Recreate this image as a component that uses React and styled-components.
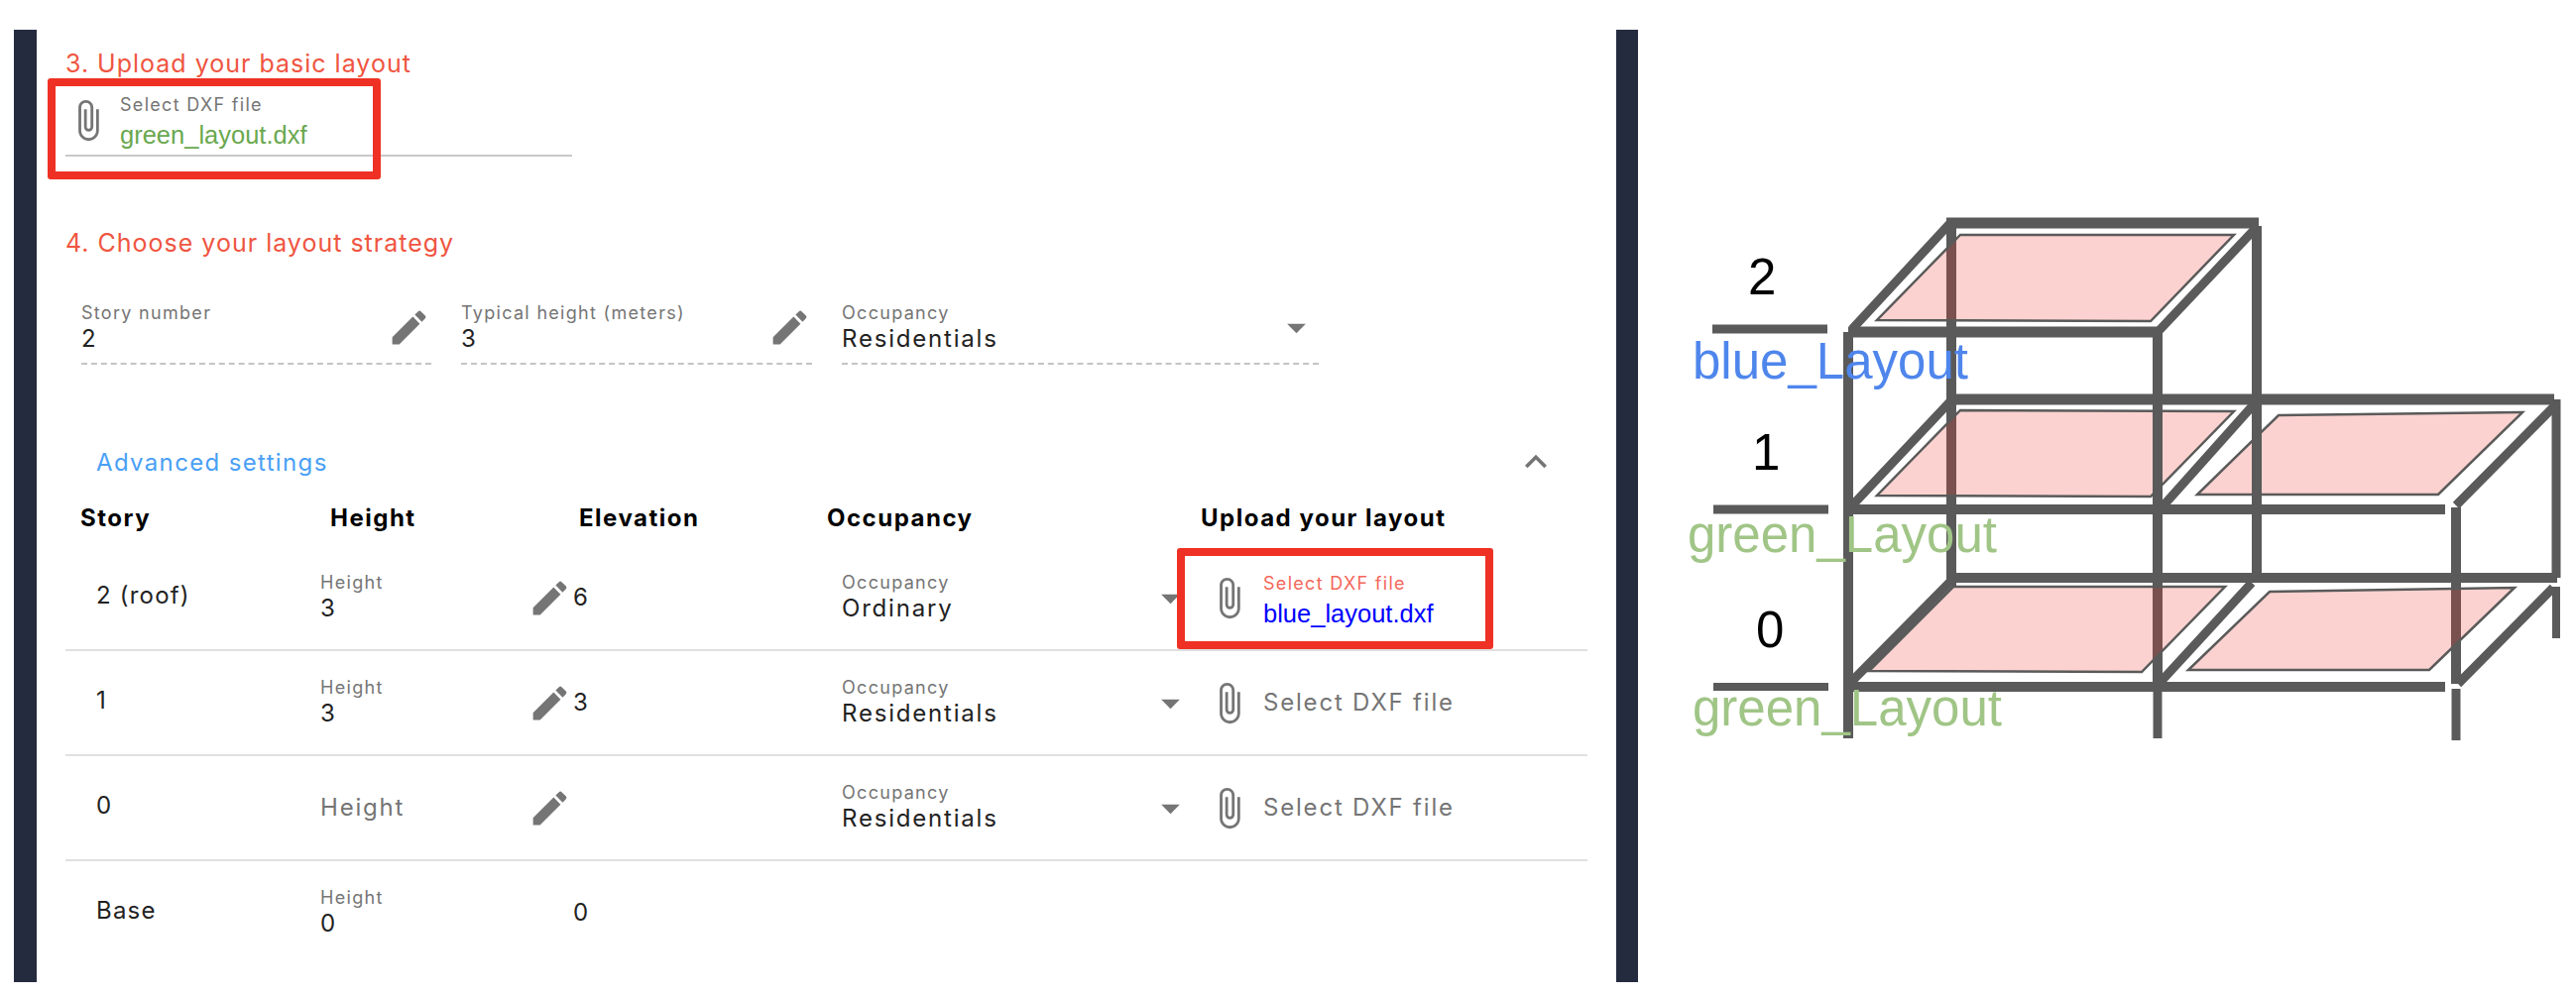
import React from "react";
import styled, { createGlobalStyle } from "styled-components";
import { MdAttachFile, MdEdit, MdArrowDropDown, MdExpandLess } from "react-icons/md";

const GlobalStyle = createGlobalStyle`
  html, body {
    margin: 0;
    background: #fff;
  }
  body {
    font-family: "Inter", "Liberation Sans", sans-serif;
  }
`;

const Page = styled.div`
  display: flex;
  width: 2598px;
  height: 1006px;
  padding: 30px 0 0 14px;
  box-sizing: border-box;
  overflow: hidden;
`;

const Panel = styled.div`
  width: 1638px;
  height: 961px;
  flex: none;
  box-sizing: border-box;
  border-left: 23px solid #252b3f;
  border-right: 22px solid #252b3f;
  padding: 21px 29px 0;
`;

const StepTitle = styled.h2`
  margin: ${(p) => p.$top || 0}px 0 0;
  font-size: 25px;
  line-height: 26px;
  font-weight: 400;
  color: #ef5541;
  letter-spacing: 1px;
`;

const UploadField = styled.div`
  position: relative;
  display: flex;
  align-items: center;
  gap: 10px;
  width: 511px;
  height: 64px;
  margin-top: 15px;
  border-bottom: 2px solid #c8c8c8;
  color: #757575;
  svg {
    flex: none;
    margin-bottom: 6px;
  }
`;

const Highlight = styled.div`
  position: absolute;
  left: ${(p) => p.$left}px;
  top: ${(p) => p.$top}px;
  width: ${(p) => p.$width}px;
  height: ${(p) => p.$height}px;
  box-sizing: border-box;
  border: 8px solid #ee3124;
  border-radius: 3px;
`;

const FileText = styled.div`
  display: flex;
  flex-direction: column;
  padding-top: ${(p) => p.$pad || 0}px;
`;

const SmallLabel = styled.span`
  font-size: 18px;
  line-height: 24px;
  color: ${(p) => p.$color || "#757575"};
  letter-spacing: 1.3px;
`;

const FileName = styled.span`
  font-family: "Liberation Sans", sans-serif;
  font-size: 25.5px;
  line-height: 36px;
  color: ${(p) => p.$color};
`;

const FieldRow = styled.div`
  display: flex;
  gap: 30px;
  margin-top: 46px;
  padding-left: 16px;
`;

const DashedField = styled.div`
  display: flex;
  align-items: center;
  justify-content: space-between;
  width: ${(p) => p.$width}px;
  height: 52px;
  padding-bottom: 10px;
  border-bottom: 2px dashed #c4c4c4;
  color: #757575;
`;

const FieldStack = styled.div`
  display: flex;
  flex-direction: column;
  padding-bottom: ${(p) => (p.$inRow ? 3 : 0)}px;
`;

const FieldValue = styled.span`
  font-size: 24px;
  line-height: 28px;
  color: #222;
  letter-spacing: 1.8px;
`;

const AdvancedRow = styled.div`
  display: flex;
  align-items: center;
  justify-content: space-between;
  height: 30px;
  margin-top: 83px;
  padding: 0 30px 0 31px;
  color: #757575;
`;

const AdvancedTitle = styled.span`
  font-size: 24px;
  color: #4a9ff5;
  letter-spacing: 1.35px;
`;

const HeaderRow = styled.div`
  display: grid;
  grid-template-columns: 252px 251px 250px 377px 1fr;
  height: 30px;
  margin-top: 27px;
  padding-left: 15px;
`;

const HeaderCell = styled.span`
  font-size: 24px;
  line-height: 30px;
  font-weight: 700;
  color: #000;
  letter-spacing: 1.5px;
`;

const TableBody = styled.div`
  margin-top: 13px;
`;

const Row = styled.div`
  display: grid;
  grid-template-columns: 257px 209px 317px 368px 1fr;
  align-items: center;
  height: 104px;
  border-bottom: ${(p) => (p.$last ? "none" : "2px solid #e0e0e0")};
  color: #757575;
`;

const StoryCell = styled.span`
  padding: 0 0 5px 31px;
  font-size: 24px;
  color: #222;
  letter-spacing: 1.2px;
`;

const ElevationCell = styled.div`
  display: flex;
  align-items: center;
  gap: 1px;
  padding-left: ${(p) => (p.$plain ? 46 : 0)}px;
`;

const OccupancyCell = styled.div`
  display: flex;
  align-items: center;
  justify-content: space-between;
  padding-right: 14px;
`;

const FileCell = styled.div`
  position: relative;
  display: flex;
  align-items: center;
  gap: 12px;
`;

const Placeholder = styled.span`
  padding-bottom: 2px;
  font-size: 24px;
  color: #757575;
  letter-spacing: 1.8px;
`;

const Figure = styled.svg`
  flex: none;
  width: 946px;
  height: 976px;
`;

const FigureLabel = styled.text`
  font-family: "Liberation Sans", sans-serif;
  font-size: ${(p) => p.$size || 51}px;
  fill: ${(p) => p.$color || "#000"};
`;

const rows = [
  { story: "2 (roof)", height: "3", elevation: "6", occupancy: "Ordinary", highlighted: true },
  { story: "1", height: "3", elevation: "3", occupancy: "Residentials" },
  { story: "0", elevation: "", occupancy: "Residentials" },
];

const floors = [
  "1977,237 2253,237 2169,324 1893,323",
  "1977,414 2253,415 2169,501 1893,500",
  "2298,419 2544,416 2459,499 2216,499",
  "1970,592 2244,592 2160,678 1885,677",
  "2289,597 2536,593 2450,676 2207,676",
];

// [x1, y1, x2, y2, width]; the ones seen through the pink floors go first
const backLines = [
  [1968, 225, 1968, 592, 10],
  [2176, 592, 2176, 690, 10],
  [2477, 592, 2477, 690, 10],
];

const frontLines = [
  [2176, 340, 2176, 592, 10],
  [2176, 698, 2176, 745, 9],
  [2477, 512, 2477, 592, 10],
  [2477, 695, 2477, 747, 9],
  [1864, 335, 1864, 745, 10],
  [2276, 228, 2276, 587, 10],
  [2578, 403, 2578, 583, 9],
  [2578, 592, 2578, 644, 8],
  [1963, 225, 2278, 225, 11],
  [1864, 335, 2181, 335, 11],
  [1967, 225, 1868, 332, 9],
  [2277, 228, 2178, 333, 9],
  [1963, 403, 2576, 403, 11],
  [1864, 514, 2466, 514, 10],
  [1967, 405, 1868, 510, 9],
  [2274, 407, 2182, 510, 9],
  [2579, 407, 2477, 510, 9],
  [1963, 583, 2579, 583, 10],
  [1864, 693, 2466, 693, 10],
  [1967, 587, 1868, 687, 9],
  [2271, 588, 2180, 687, 9],
  [2575, 593, 2479, 690, 9],
  [1727, 332, 1843, 332, 9],
  [1728, 514, 1844, 514, 9],
  [1728, 693, 1844, 693, 8],
];

const Lines = ({ items }) =>
  items.map(([x1, y1, x2, y2, width]) => (
    <line
      key={`${x1}-${y1}-${x2}-${y2}`}
      x1={x1}
      y1={y1}
      x2={x2}
      y2={y2}
      stroke="#5a5a5a"
      strokeWidth={width}
    />
  ));

const App = () => {
  return (
    <Page>
      <GlobalStyle />
      <Panel>
        <StepTitle>3. Upload your basic layout</StepTitle>
        <UploadField>
          <MdAttachFile size={45} />
          <FileText>
            <SmallLabel>Select DXF file</SmallLabel>
            <FileName $color="#6aa84f">green_layout.dxf</FileName>
          </FileText>
          <Highlight $left={-18} $top={-13} $width={336} $height={102} />
        </UploadField>

        <StepTitle $top={74}>4. Choose your layout strategy</StepTitle>
        <FieldRow>
          <DashedField $width={353}>
            <FieldStack>
              <SmallLabel>Story number</SmallLabel>
              <FieldValue>2</FieldValue>
            </FieldStack>
            <MdEdit size={45} />
          </DashedField>
          <DashedField $width={354}>
            <FieldStack>
              <SmallLabel>Typical height (meters)</SmallLabel>
              <FieldValue>3</FieldValue>
            </FieldStack>
            <MdEdit size={45} />
          </DashedField>
          <DashedField $width={481}>
            <FieldStack>
              <SmallLabel>Occupancy</SmallLabel>
              <FieldValue>Residentials</FieldValue>
            </FieldStack>
            <MdArrowDropDown size={45} />
          </DashedField>
        </FieldRow>

        <AdvancedRow>
          <AdvancedTitle>Advanced settings</AdvancedTitle>
          <MdExpandLess size={44} />
        </AdvancedRow>

        <HeaderRow>
          <HeaderCell>Story</HeaderCell>
          <HeaderCell>Height</HeaderCell>
          <HeaderCell>Elevation</HeaderCell>
          <HeaderCell>Occupancy</HeaderCell>
          <HeaderCell>Upload your layout</HeaderCell>
        </HeaderRow>

        <TableBody>
          {rows.map((row) => (
            <Row key={row.story}>
              <StoryCell>{row.story}</StoryCell>
              {row.height ? (
                <FieldStack $inRow>
                  <SmallLabel>Height</SmallLabel>
                  <FieldValue>{row.height}</FieldValue>
                </FieldStack>
              ) : (
                <Placeholder>Height</Placeholder>
              )}
              <ElevationCell>
                <MdEdit size={45} />
                <FieldValue>{row.elevation}</FieldValue>
              </ElevationCell>
              <OccupancyCell>
                <FieldStack $inRow>
                  <SmallLabel>Occupancy</SmallLabel>
                  <FieldValue>{row.occupancy}</FieldValue>
                </FieldStack>
                <MdArrowDropDown size={45} />
              </OccupancyCell>
              <FileCell>
                <MdAttachFile size={45} />
                {row.highlighted ? (
                  <FileText $pad={8}>
                    <SmallLabel $color="#f4675a">Select DXF file</SmallLabel>
                    <FileName $color="#0000ff">blue_layout.dxf</FileName>
                  </FileText>
                ) : (
                  <Placeholder>Select DXF file</Placeholder>
                )}
                {row.highlighted ? <Highlight $left={-30} $top={-16} $width={319} $height={102} /> : null}
              </FileCell>
            </Row>
          ))}
          <Row $last>
            <StoryCell>Base</StoryCell>
            <FieldStack $inRow>
              <SmallLabel>Height</SmallLabel>
              <FieldValue>0</FieldValue>
            </FieldStack>
            <ElevationCell $plain>
              <FieldValue>0</FieldValue>
            </ElevationCell>
          </Row>
        </TableBody>
      </Panel>

      <Figure viewBox="1652 30 946 976">
        <Lines items={backLines} />
        {floors.map((points) => (
          <polygon
            key={points}
            points={points}
            fill="rgba(238,49,36,0.22)"
            stroke="#5a5a5a"
            strokeWidth="2.5"
          />
        ))}
        <Lines items={frontLines} />
        <FigureLabel x="1763" y="297">2</FigureLabel>
        <FigureLabel x="1767" y="474">1</FigureLabel>
        <FigureLabel x="1771" y="653">0</FigureLabel>
        <FigureLabel x="1707" y="382" $color="#4f86ec">blue_Layout</FigureLabel>
        <FigureLabel x="1702" y="557" $color="#a0c586">green_Layout</FigureLabel>
        <FigureLabel x="1707" y="732" $color="#a0c586">green_Layout</FigureLabel>
      </Figure>
    </Page>
  );
};

export default App;
